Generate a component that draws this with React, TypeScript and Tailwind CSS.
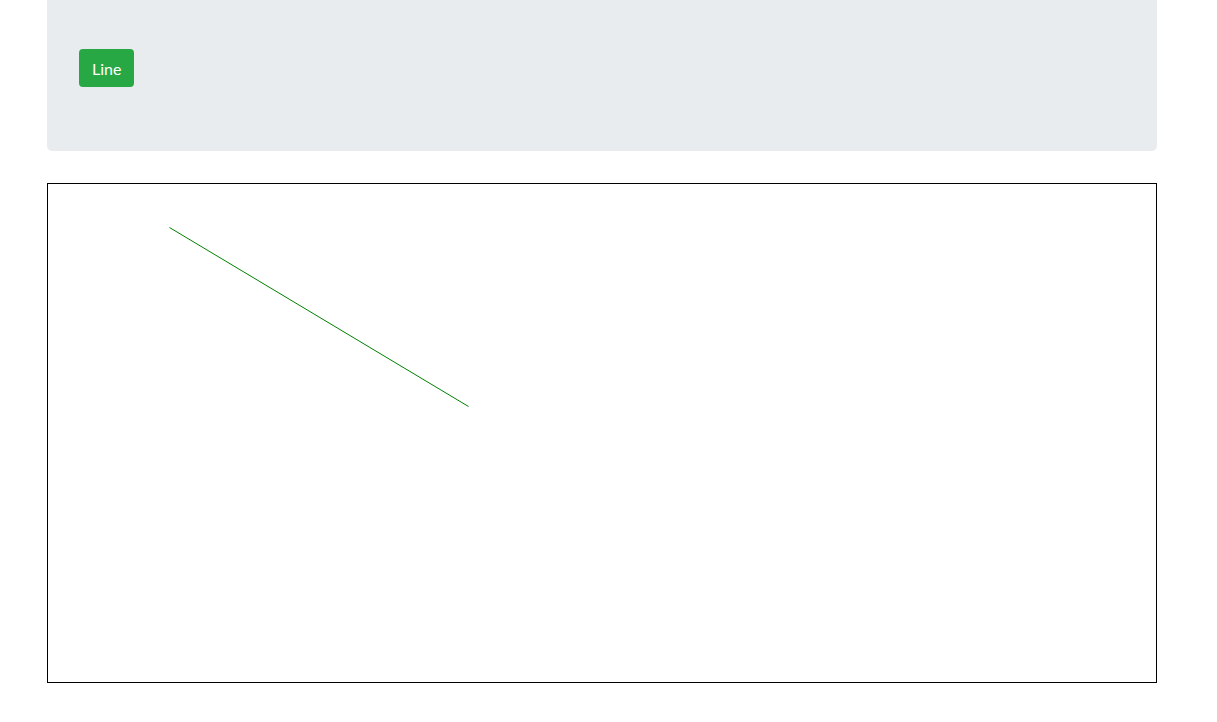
import React from 'react';

export default function App() {
  return (
    <div className="min-h-[722px] bg-white font-['Lato',sans-serif]">
      <div className="ml-[47px] w-[1110px]">
        <div className="rounded-b-[5px] bg-[#e9ecef] px-8 pb-16 pt-[49px]">
          <button className="h-[38px] rounded-[4px] bg-[#28a745] px-[13px] pt-px text-base leading-6 text-white">
            Line
          </button>
        </div>
        <div className="mt-8 h-[500px] w-[1110px] border border-black">
          <svg width="1108" height="498" className="block">
            <line x1="121.5" y1="43.5" x2="420.5" y2="222.5" stroke="#008000" strokeWidth="1" />
          </svg>
        </div>
      </div>
    </div>
  );
}
